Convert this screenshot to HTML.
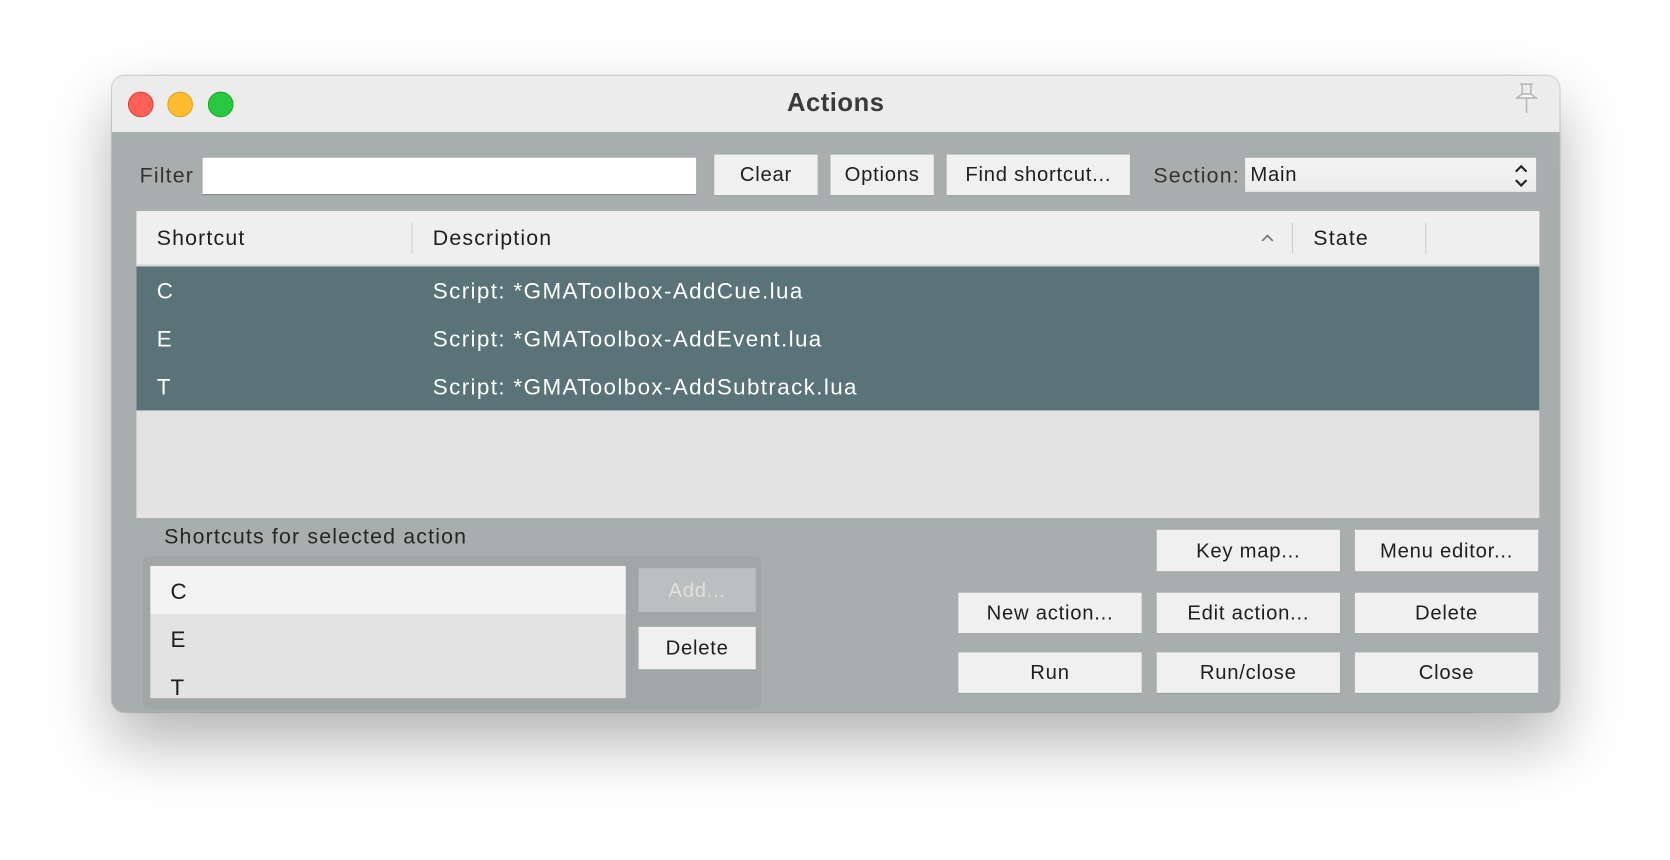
<!DOCTYPE html>
<html><head><meta charset="utf-8"><style>
html,body{margin:0;padding:0;width:1670px;height:860px;overflow:hidden;background:#fff;}
#s{position:absolute;left:0;top:0;width:1567px;height:807px;transform:scale(1.066);transform-origin:0 0;font-family:"Liberation Sans",sans-serif;color:#1e1e1e;}
.a{position:absolute;}
.win{left:105px;top:71px;width:1358px;height:597px;border-radius:12px;background:#a8adad;box-shadow:0 28px 60px rgba(0,0,0,0.30),0 0 0 1px rgba(0,0,0,0.15);overflow:hidden;}
.tb{left:0;top:0;width:1358px;height:53px;background:#ececec;border-bottom:1px solid #a0a0a0;}
.dot{width:22px;height:22px;border-radius:50%;top:15px;}
.btn{background:#f0f0f0;font-size:19px;letter-spacing:0.7px;text-align:center;box-shadow:0 1px 1px rgba(0,0,0,0.15);}
.t{font-size:20px;letter-spacing:1.1px;top:1px}
.r{font-size:21px;letter-spacing:1.3px}
</style></head><body><div id="s">
<div class="a win">
 <div class="a tb">
  <div class="a dot" style="left:15px;background:#fe5f57;border:0.5px solid #e0443e"></div>
  <div class="a dot" style="left:52px;background:#febc2e;border:0.5px solid #dea123"></div>
  <div class="a dot" style="left:90px;background:#28c840;border:0.5px solid #1aab29"></div>
  <div class="a" style="left:0;width:1358px;top:12px;text-align:center;font-size:24px;font-weight:bold;color:#3a3a3a;letter-spacing:0.5px">Actions</div>
  <svg class="a" style="left:1312px;top:5px" width="30" height="34" viewBox="0 0 30 34"><path d="M9 3h12M11 3v10M19 3v10M6 16h18l-5-4h-8z M15 16v14" fill="#f5f5f5" stroke="#b8b8b8" stroke-width="1.5"/></svg>
 </div>
 <div class="a t" style="left:26px;top:83px;color:#333">Filter</div>
 <div class="a" style="left:85px;top:77px;width:463px;height:34px;background:#fff;box-shadow:0 1px 1px rgba(0,0,0,.3)"></div>
 <div class="a btn" style="left:565px;top:74px;width:97px;height:38px;line-height:40px">Clear</div>
 <div class="a btn" style="left:674px;top:74px;width:97px;height:38px;line-height:40px">Options</div>
 <div class="a btn" style="left:783px;top:74px;width:172px;height:38px;line-height:40px">Find shortcut...</div>
 <div class="a t" style="left:977px;top:83px;color:#333">Section:</div>
 <div class="a" style="left:1063px;top:77px;width:273px;height:32px;background:linear-gradient(#f4f4f4,#ececec);font-size:19px;letter-spacing:0.7px;line-height:34px;padding-left:5px;box-sizing:border-box">Main
  <svg class="a" style="left:251px;top:6px" width="16" height="22" viewBox="0 0 16 22"><path d="M3 7l5-5 5 5M3 15l5 5 5-5" fill="none" stroke="#222" stroke-width="2"/></svg></div>
 <div class="a" style="left:23px;top:127px;width:1316px;height:288px;background:#e3e3e3">
  <div class="a" style="left:0;top:0;width:1316px;height:50px;background:#efefef;border-bottom:2px solid #d8d8d8"></div>
  <div class="a" style="left:258px;top:11px;width:1px;height:29px;background:#ccc"></div>
  <div class="a" style="left:1084px;top:11px;width:1px;height:29px;background:#ccc"></div>
  <div class="a" style="left:1209px;top:11px;width:1px;height:29px;background:#ccc"></div>
  <div class="a t" style="left:19px;top:15px">Shortcut</div>
  <div class="a t" style="left:278px;top:15px">Description</div>
  <svg class="a" style="left:1054px;top:20px" width="14" height="10"><path d="M2 8l5-5 5 5" fill="none" stroke="#777" stroke-width="1.6"/></svg>
  <div class="a t" style="left:1104px;top:15px">State</div>
  <div class="a" style="left:0;top:52px;width:1316px;height:135px;background:#5a7378;color:#fff">
   <div class="a r" style="left:19px;top:12px">C</div><div class="a r" style="left:278px;top:12px">Script: *GMAToolbox-AddCue.lua</div>
   <div class="a r" style="left:19px;top:57px">E</div><div class="a r" style="left:278px;top:57px">Script: *GMAToolbox-AddEvent.lua</div>
   <div class="a r" style="left:19px;top:102px">T</div><div class="a r" style="left:278px;top:102px">Script: *GMAToolbox-AddSubtrack.lua</div>
  </div>
 </div>
 <div class="a t" style="left:49px;top:422px;color:#262626">Shortcuts for selected action</div>
 <div class="a" style="left:29px;top:451px;width:580px;height:143px;background:#a1a6a6;border-radius:6px"></div>
 <div class="a" style="left:36px;top:460px;width:446px;height:124px;background:#e3e3e3;overflow:hidden">
  <div class="a" style="left:0;top:0;width:446px;height:45px;background:#f3f3f3"></div>
  <div class="a r" style="left:19px;top:13px">C</div>
  <div class="a r" style="left:19px;top:58px">E</div>
  <div class="a r" style="left:19px;top:103px">T</div>
 </div>
 <div class="a btn" style="left:494px;top:462px;width:110px;height:41px;line-height:43px;background:#babfbf;color:#e0e0e0;box-shadow:none">Add...</div>
 <div class="a btn" style="left:494px;top:517px;width:110px;height:40px;line-height:42px">Delete</div>
 <div class="a btn" style="left:980px;top:426px;width:172px;height:39px;line-height:41px">Key map...</div>
 <div class="a btn" style="left:1166px;top:426px;width:172px;height:39px;line-height:41px">Menu editor...</div>
 <div class="a btn" style="left:794px;top:485px;width:172px;height:38px;line-height:40px">New action...</div>
 <div class="a btn" style="left:980px;top:485px;width:172px;height:38px;line-height:40px">Edit action...</div>
 <div class="a btn" style="left:1166px;top:485px;width:172px;height:38px;line-height:40px">Delete</div>
 <div class="a btn" style="left:794px;top:541px;width:172px;height:38px;line-height:40px">Run</div>
 <div class="a btn" style="left:980px;top:541px;width:172px;height:38px;line-height:40px">Run/close</div>
 <div class="a btn" style="left:1166px;top:541px;width:172px;height:38px;line-height:40px">Close</div>
</div>
</div></body></html>
